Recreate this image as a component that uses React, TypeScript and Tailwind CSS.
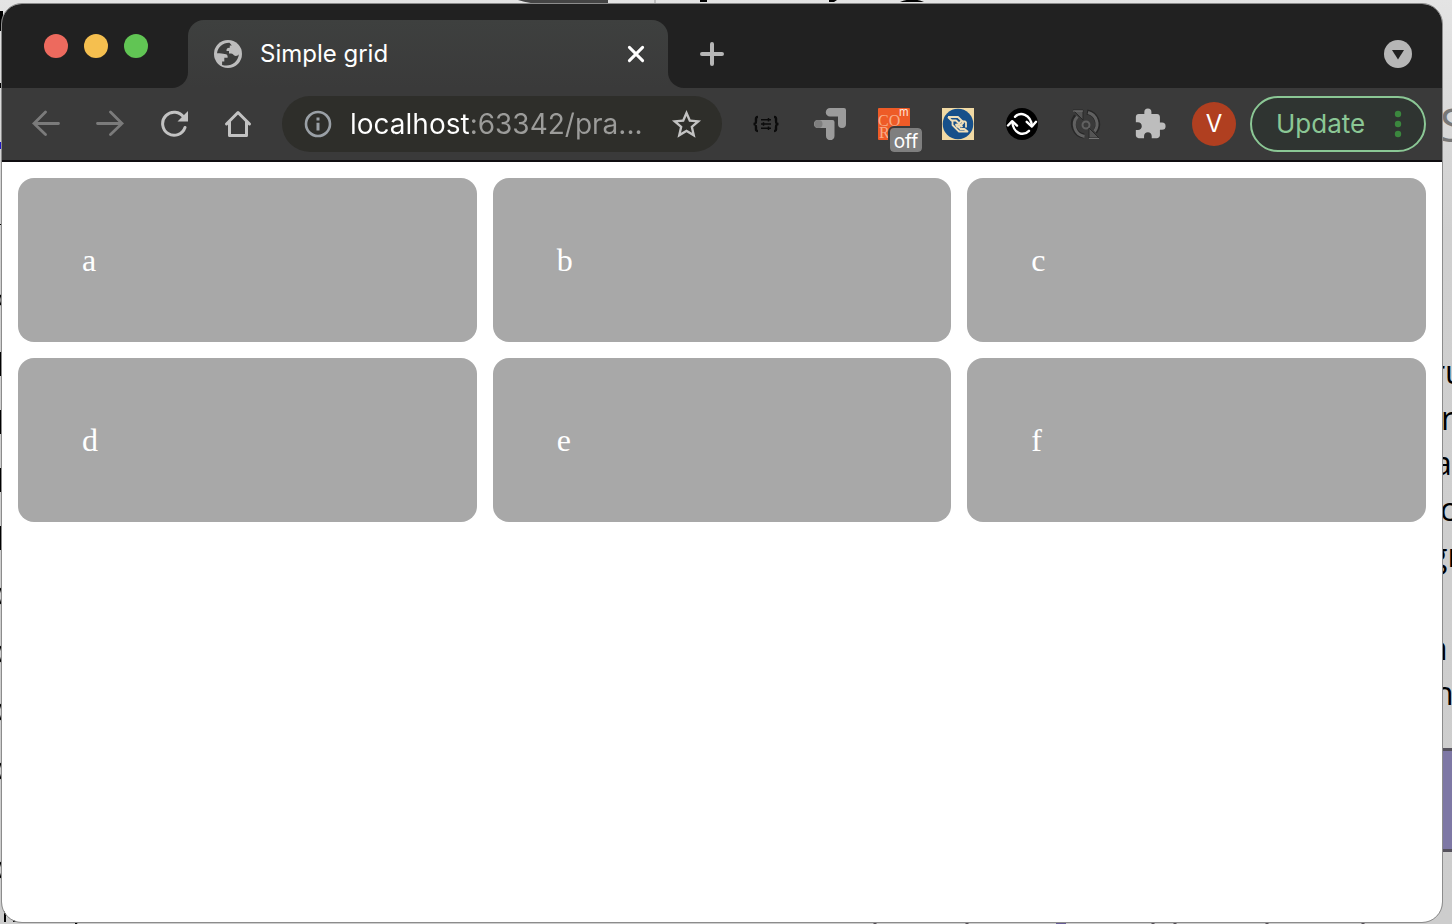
import type { ReactNode } from "react";
import { MdExtension, MdStarBorder } from "react-icons/md";

const cells = ["a", "b", "c", "d", "e", "f"];

const rightLines = [
  { text: "S", className: "absolute left-[1440px] top-[98px] text-[46px] leading-[52px] text-[#777]" },
  { text: "ru", className: "absolute left-[1432px] top-[350px] text-[32px] leading-[44px] text-black" },
  { text: "r", className: "absolute left-[1441px] top-[396px] text-[32px] leading-[44px] text-black" },
  { text: "a", className: "absolute left-[1434px] top-[441px] text-[32px] leading-[44px] text-black" },
  { text: "c", className: "absolute left-[1440px] top-[487px] text-[32px] leading-[44px] text-black" },
  { text: "gr", className: "absolute left-[1430px] top-[533px] text-[32px] leading-[44px] text-black" },
  { text: "n", className: "absolute left-[1428px] top-[626px] text-[32px] leading-[44px] text-black" },
  { text: "n", className: "absolute left-[1434px] top-[671px] text-[32px] leading-[44px] text-black" },
];

function Backdrop() {
  return (
    <div aria-hidden="true" className="absolute inset-0 overflow-hidden bg-linear-to-b from-[#e4e4e4] from-0% via-[#cfcfcf] via-25% to-[#cdcdcd] font-['Open_Sans',sans-serif]">
      {rightLines.map((line, i) => (
        <span key={i} className={line.className}>{line.text}</span>
      ))}
      <div className="absolute right-0 top-[748px] h-[104px] w-4 border-y-3 border-[#55525c] bg-[#7e78a5]" />
      <svg className="absolute left-0 top-0" width="1452" height="924" viewBox="0 0 1452 924">
        <path d="M518 0Q530 4 545 4H608V0Z" fill="#444" />
        <path d="M655 0V3" stroke="#999" />
        <path d="M700 0h7v2h-7zM829 0h8l-3 2h-5zM900 2q12-5 24 0z" />
        <path d="M0 11h3v20H0zM0 83h2v5H0zM0 224h2v1H0zM0 352h2v24H0zM0 410h2v24H0zM0 468h2v24H0zM0 526h2v24H0zM4 910h2v12H4zM13 920h3v2h-3zM75 922h3l-1 2h-2z" />
        <path d="M0 142h2v7H0z" fill="#2118c4" />
        <path d="M0 295q3 5 0 10M0 588q4 8 0 16M0 646q4 8 0 16M0 704q4 8 0 16M0 763q4 8 0 16M0 862q4 8 0 16" fill="none" stroke="#000" strokeWidth="1.500" />
        <path d="M875 922v2M967 922v2M1153 922v2M1175 922v2M1267 922v2M1363 922v2" stroke="#554e55" strokeWidth="3" />
        <path d="M1056 922h10v2h-10z" fill="#675c96" />
      </svg>
    </div>
  );
}

function ToolButton({ label, disabled, children }: { label: string; disabled?: boolean; children: ReactNode }) {
  return (
    <button type="button" aria-label={label} disabled={disabled} className="flex h-14 w-16 shrink-0 items-center justify-center">
      {children}
    </button>
  );
}

function TabStrip() {
  return (
    <header className="flex h-[84px] bg-[#3a3a3a]">
      <div className="flex w-[186px] shrink-0 gap-4 rounded-br-2xl bg-[#212121] pl-[42px] pt-[30px]">
        <button type="button" aria-label="Close" className="size-6 rounded-full bg-[#ed6a5e]" />
        <button type="button" aria-label="Minimize" className="size-6 rounded-full bg-[#f5bf4f]" />
        <button type="button" aria-label="Zoom" className="size-6 rounded-full bg-[#61c554]" />
      </div>
      <div className="w-[480px] bg-[#212121] pt-4">
        <div className="flex h-full items-center rounded-t-2xl bg-linear-to-b from-[#3e403f] to-[#3a3a3a] pl-6 pr-4">
          <svg width="32" height="32" viewBox="0 0 32 32" className="shrink-0">
            <circle cx="16" cy="16" r="14" fill="#bdbdbd" />
            <path d="M17.500 4.800C11 4.600 5.800 9 5 15.200c3.500 0 6 .1 7.600.8 1.700-.1 2.700.7 3 2.300v1.500h-3.300v3.800h-2.200v3.300c8 2.600 16-2.500 16.800-10.900-1 2.200-3.500 2.400-5 1.300-.8-1.500-2-1.800-4.900-1.800v-2.500h-2.500c-.2-2.400 1-3.400 3.300-3.200V7.500h2z" fill="#3c3d3c" />
          </svg>
          <span className="ml-4 flex-1 text-[24px] leading-8 text-white">Simple grid</span>
          <button type="button" aria-label="Close tab" className="flex size-8 items-center justify-center">
            <svg width="32" height="32" viewBox="0 0 32 32" stroke="#fff" strokeWidth="3" strokeLinecap="round">
              <path d="M9.4 9.4 22.6 22.6M22.6 9.4 9.4 22.6" />
            </svg>
          </button>
        </div>
      </div>
      <div className="flex flex-1 items-center justify-between rounded-bl-2xl bg-[#212121] pl-4 pr-4 pt-4">
        <button type="button" aria-label="New tab" className="flex size-14 items-center justify-center">
          <svg width="28" height="28" viewBox="0 0 28 28" stroke="#b6b6b6" strokeWidth="4" strokeLinecap="round">
            <path d="M14 4v20M4 14h20" />
          </svg>
        </button>
        <button type="button" aria-label="Search tabs" className="flex size-14 items-center justify-center">
          <svg width="28" height="28" viewBox="0 0 28 28">
            <circle cx="14" cy="14" r="14" fill="#b6b6b6" />
            <path d="M8 10h12l-6 9.5z" fill="#212121" />
          </svg>
        </button>
      </div>
    </header>
  );
}

function Extensions() {
  return (
    <div className="ml-3 flex">
      <ToolButton label="JSON formatter">
        <svg width="28" height="18" viewBox="0 0 28 18" fill="none" stroke="#0b0b0b" strokeWidth="2.4">
          <path d="M6 2C3.500 2 4 3.500 4 5.500S4 9 1.500 9C4 9 4 10.500 4 12.500S3.500 16 6 16M22 2c2.500 0 2 1.500 2 3.500S24 9 26.500 9C24 9 24 10.500 24 12.500s.5 3.500-2 3.500" />
          <path d="M9 4.800h10M9 9h10M9 13.200h10" strokeWidth="1.500" />
          <path d="M16.500 3v3.600M11.500 7.200v3.600M16.500 11.400V15" strokeWidth="1.500" />
        </svg>
      </ToolButton>
      <ToolButton label="Shortcuts">
        <svg width="32" height="32" viewBox="0 0 32 32" fill="#9b9b9b">
          <path d="M16 0h14a2 2 0 0 1 2 2v14a4 4 0 0 1-8 0V8.500h-8a4.200 4.200 0 0 1 0-8.500z" />
          <path d="M4 12h14.500a2 2 0 0 1 2 2v14a4.200 4.200 0 0 1-8.500 0v-8H4a4 4 0 0 1 0-8z" />
          <circle cx="4.500" cy="16" r="4" fill="#7e7e7e" />
        </svg>
      </ToolButton>
      <ToolButton label="CORS off">
        <span className="relative block size-8">
          <svg width="32" height="32" viewBox="0 0 32 32">
            <rect width="32" height="32" rx="1" fill="#ee5b27" />
            <g fill="#f8ab86" fontFamily="Liberation Serif, serif" fontSize="16">
              <text x="0" y="18">CO</text>
              <text x="1" y="30">R</text>
            </g>
            <text x="21" y="8" fill="#ffe6dc" fontFamily="Inter, sans-serif" fontSize="11">m</text>
          </svg>
          <span className="absolute -bottom-3 -right-3 flex h-6 w-8 items-center justify-center rounded bg-[#7f7f7f] pt-1 text-[19px] leading-5 text-white outline-2 outline-[#3a3a3a]">off</span>
        </span>
      </ToolButton>
      <ToolButton label="Web socket client">
        <svg width="32" height="32" viewBox="0 0 32 32">
          <path d="M0 0h32v32H0z" fill="#f0d9a4" />
          <circle cx="16" cy="16" r="15.300" fill="#17508a" />
          <g fill="none" stroke="#f0dfb9" strokeWidth="1.800" strokeLinejoin="round">
            <path d="M6 9h10l5.500 5.500M6 9l3.500 3.500h4.500l6.500 6.500" />
            <path d="M10.500 13v4l6.500 6.500h8.500l-3-2.500h-4l-5-5" />
            <path d="M14 18.500l5-5h4l1 1v5M14 18.500h3.500l4-4" />
          </g>
        </svg>
      </ToolButton>
      <ToolButton label="Sync">
        <svg width="32" height="32" viewBox="0 0 32 32">
          <circle cx="16" cy="16" r="16" fill="#000" />
          <g fill="none" stroke="#fff" strokeWidth="2.400" strokeLinecap="round" strokeLinejoin="round">
            <path d="M9 8.800C14 3.600 24.500 5.500 26 18M23 22.800C17.500 28.500 7.500 26 6.300 14" />
            <path d="M20.700 13.800 25.900 18.500 30 13.800M2 17.500 6.200 13.200 11 17.700" />
          </g>
        </svg>
      </ToolButton>
      <ToolButton label="Reload extensions">
        <svg width="32" height="32" viewBox="0 0 32 32" fill="none">
          <g stroke="#272727" strokeWidth="5">
            <path d="M17 4a12.500 12.500 0 0 1 8 20M14 28A12.500 12.500 0 0 1 6 8" />
          </g>
          <g stroke="#616161" strokeWidth="3">
            <path d="M18 4.500a12 12 0 0 1 6.500 19M14.500 28.500A12 12 0 0 1 7.500 8.500" />
            <circle cx="16" cy="17" r="3.500" strokeWidth="2" />
          </g>
          <path d="M3 2h10v10zM19 20v10h10z" fill="#555" stroke="#292929" />
          <path d="M3 3h10M19 30.500h10" stroke="#747474" />
        </svg>
      </ToolButton>
      <ToolButton label="Extensions">
        <MdExtension size={34} color="#bdbdbd" />
      </ToolButton>
    </div>
  );
}

function Toolbar() {
  return (
    <nav aria-label="Browser toolbar" className="flex h-[74px] items-center border-b-2 border-[#0f0d10] bg-[#3a3a3a] pl-3 pr-4">
      <ToolButton label="Back" disabled>
        <svg width="28" height="28" viewBox="0 0 28 28" fill="none" stroke="#7b7b7b" strokeWidth="2.800" strokeLinecap="round">
          <path d="M26.500 13.500H2M13.500 2 2 13.500l11.500 11" />
        </svg>
      </ToolButton>
      <ToolButton label="Forward" disabled>
        <svg width="28" height="28" viewBox="0 0 28 28" fill="none" stroke="#7b7b7b" strokeWidth="2.800" strokeLinecap="round">
          <path d="M1.500 13.500H26M14.500 2 26 13.500l-11.500 11" />
        </svg>
      </ToolButton>
      <ToolButton label="Reload">
        <svg width="28" height="28" viewBox="0 0 28 28" fill="none" stroke="#c2c2c2" strokeWidth="3" strokeLinecap="round">
          <path d="M23.800 7.500A11.500 11.500 0 1 0 25 17.500" />
          <path d="M28 1v10.500H17.500z" fill="#c2c2c2" stroke="none" />
        </svg>
      </ToolButton>
      <ToolButton label="Home">
        <svg width="28" height="28" viewBox="0 0 28 28" fill="none" stroke="#c2c2c2" strokeWidth="3" strokeLinejoin="round" strokeLinecap="round">
          <path d="M2.500 14 14 2.500 25.500 14M5.500 12v13.500h17V12" />
        </svg>
      </ToolButton>
      <div className="ml-3 flex h-14 min-w-0 flex-1 items-center rounded-full bg-[#2e2e2a] pl-[22px] pr-4">
        <svg width="28" height="28" viewBox="0 0 28 28" className="shrink-0">
          <circle cx="14" cy="14" r="12" fill="none" stroke="#9aa0a6" strokeWidth="2.600" />
          <path d="M12.500 7.500h3v3h-3zM12.500 12.700h3v7.800h-3z" fill="#9aa0a6" />
        </svg>
        <input
          type="text"
          aria-label="Address"
          defaultValue="localhost:63342/pra..."
          className="ml-[18px] h-10 min-w-0 flex-1 bg-linear-to-r from-white from-[121px] to-[#9c9c9a] to-[121px] bg-clip-text text-[28px] leading-10 text-transparent outline-none"
        />
        <button type="button" aria-label="Bookmark" className="flex size-10 shrink-0 items-center justify-center">
          <MdStarBorder size={35} color="#c2c2c2" />
        </button>
      </div>
      <Extensions />
      <div className="flex w-16 shrink-0 justify-center">
        <button type="button" aria-label="Profile V" className="size-11 rounded-full bg-[#b03f20] text-[24px] leading-10 text-white">V</button>
      </div>
      <button type="button" className="ml-1 flex h-14 w-44 shrink-0 items-center justify-between rounded-full border-2 border-[#8bc795] bg-[#2f3431] pl-6 pr-[22px] text-[26px] leading-8 text-[#8bc795]">
        Update
        <svg width="8" height="28" viewBox="0 0 8 28" fill="#3b873e">
          <circle cx="4" cy="4" r="3.200" />
          <circle cx="4" cy="14" r="3.200" />
          <circle cx="4" cy="24" r="3.200" />
        </svg>
      </button>
    </nav>
  );
}

export default function App() {
  return (
    <div className="relative flex min-h-screen flex-col pb-0.5 pl-0.5 pr-2.5 pt-1 font-[Inter,sans-serif]">
      <Backdrop />
      <div className="relative flex flex-1 flex-col overflow-hidden rounded-[20px] bg-white outline outline-[#8c8c8c]">
        <TabStrip />
        <Toolbar />
        <main className="grid grid-cols-3 gap-4 p-4 font-['Liberation_Serif',serif] text-[32px] leading-9 text-white">
          {cells.map((cell) => (
            <div key={cell} className="rounded-2xl bg-[#a8a8a8] p-16">{cell}</div>
          ))}
        </main>
      </div>
    </div>
  );
}
